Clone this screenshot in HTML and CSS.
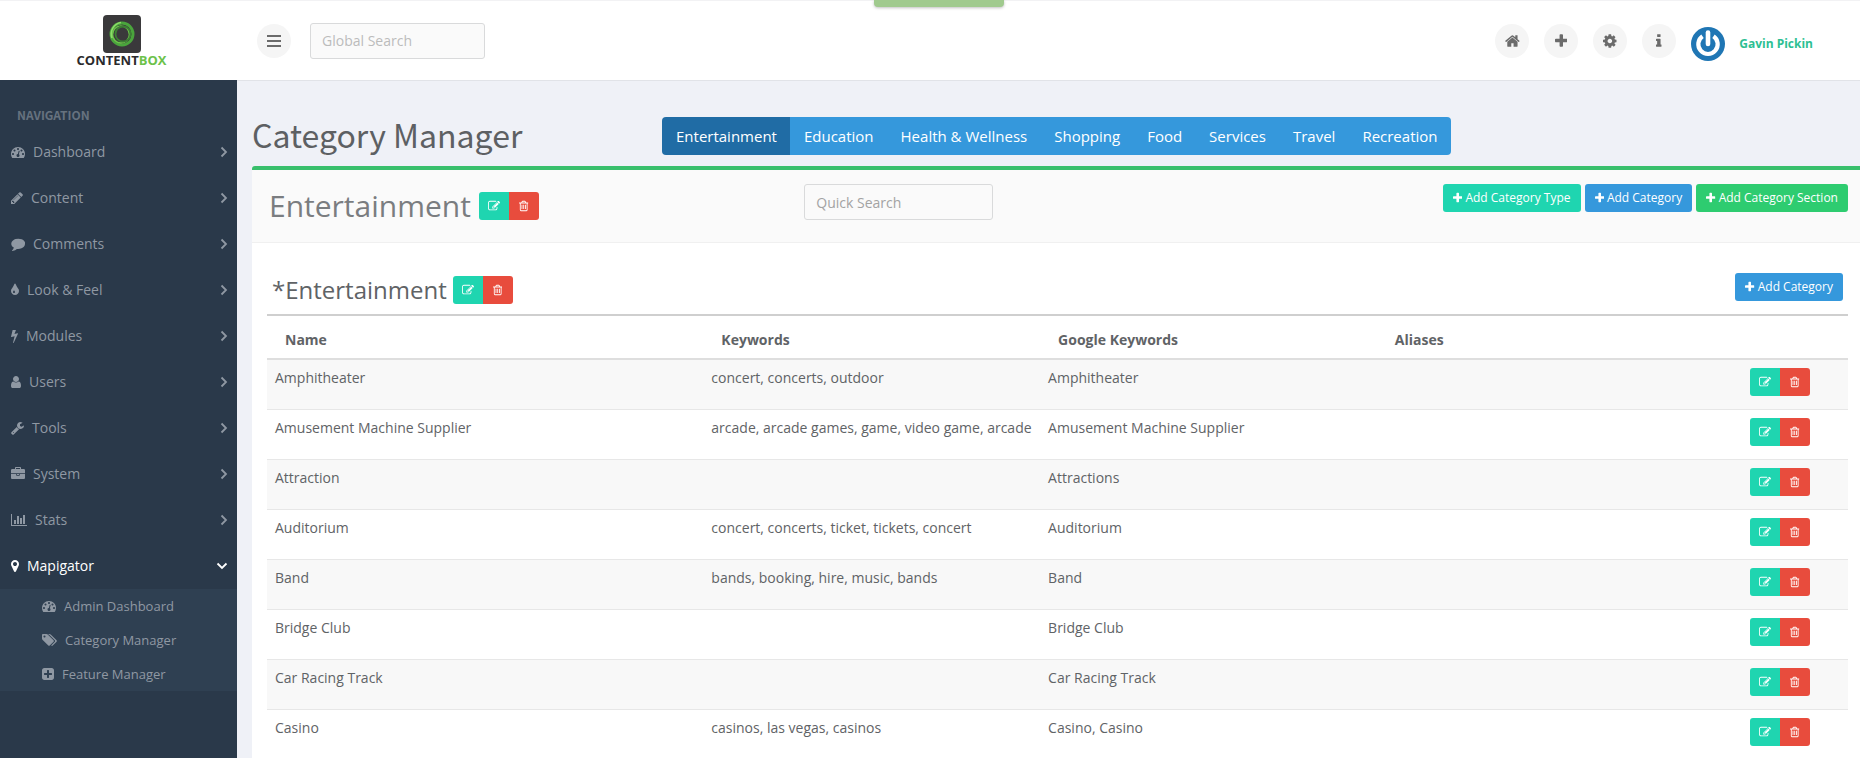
FILE: index.html
```html
<!DOCTYPE html>
<html lang="en">
<head>
<meta charset="utf-8">
<title>Category Manager</title>
<link rel="stylesheet" href="styles.css">
</head>
<body>
<svg class="sprite" aria-hidden="true">
  <symbol id="i-home" viewBox="64 0 1664 1792"><path d="M1472 992v480q0 26-19 45t-45 19h-384v-384h-256v384h-384q-26 0-45-19t-19-45v-480q0-1 .5-3t.5-3l575-474 575 474q1 2 1 6zm223-69l-62 74q-8 9-21 11h-3q-13 0-21-7l-692-577-692 577q-12 8-24 7-13-2-21-11l-62-74q-8-10-7-23.500t11-21.500l719-599q32-26 76-26t76 26l244 204v-195q0-14 9-23t23-9h192q14 0 23 9t9 23v408l219 182q10 8 11 21.500t-7 23.500z"/></symbol>
  <symbol id="i-plus" viewBox="192 0 1408 1792"><path d="M1600 736v192q0 40-28 68t-68 28h-416v416q0 40-28 68t-68 28h-192q-40 0-68-28t-28-68v-416h-416q-40 0-68-28t-28-68v-192q0-40 28-68t68-28h416v-416q0-40 28-68t68-28h192q40 0 68 28t28 68v416h416q40 0 68 28t28 68z"/></symbol>
  <symbol id="i-cog" viewBox="128 0 1536 1792"><path d="M1152 896q0-106-75-181t-181-75-181 75-75 181 75 181 181 75 181-75 75-181zm512-109v222q0 12-8 23t-20 13l-185 28q-19 54-39 91 35 50 107 138 10 12 10 25t-9 23q-27 37-99 108t-94 71q-12 0-26-9l-138-108q-44 23-91 38-16 136-29 186-7 28-36 28h-222q-14 0-24.500-8.500t-11.500-21.500l-28-184q-49-16-90-37l-141 107q-10 9-25 9-14 0-25-11-126-114-165-168-7-10-7-23 0-12 8-23 15-21 51-66.500t54-70.500q-27-50-41-99l-183-27q-13-2-21-12.500t-8-23.500v-222q0-12 8-23t19-13l186-28q14-46 39-92-40-57-107-138-10-12-10-24 0-10 9-23 26-36 98.500-107.500t94.500-71.500q13 0 26 10l138 107q44-23 91-38 16-136 29-186 7-28 36-28h222q14 0 24.500 8.500t11.500 21.500l28 184q49 16 90 37l142-107q9-9 24-9 13 0 25 10 129 119 165 170 7 8 7 22 0 12-8 23-15 21-51 66.500t-54 70.500q26 50 41 98l183 28q13 2 21 12.500t8 23.500z"/></symbol>
  <symbol id="i-info" viewBox="576 0 640 1792"><path d="M1216 1344v128q0 26-19 45t-45 19h-512q-26 0-45-19t-19-45v-128q0-26 19-45t45-19h64v-384h-64q-26 0-45-19t-19-45v-128q0-26 19-45t45-19h384q26 0 45 19t19 45v576h64q26 0 45 19t19 45zm-128-1152v192q0 26-19 45t-45 19h-256q-26 0-45-19t-19-45v-192q0-26 19-45t45-19h256q26 0 45 19t19 45z"/></symbol>
  <symbol id="i-bars" viewBox="0 0 16 14"><path d="M1 1h14v2H1zM1 6h14v2H1zM1 11h14v2H1z"/></symbol>
  <symbol id="i-dash" viewBox="0 0 1792 1792"><path d="M384 1152q0-53-37.500-90.500t-90.500-37.500-90.500 37.500-37.500 90.500 37.500 90.500 90.500 37.500 90.500-37.500 37.500-90.500zm192-448q0-53-37.500-90.500t-90.500-37.500-90.500 37.500-37.500 90.500 37.500 90.500 90.500 37.500 90.500-37.500 37.500-90.500zm428 481l101-382q6-26-7.500-48.500t-38.500-29.500-48 6.500-30 39.500l-101 382q-60 5-107 43.500t-63 98.500q-20 77 20 146t117 89 146-20 89-117q16-60-6-117t-72-91zm660-33q0-53-37.500-90.500t-90.500-37.500-90.500 37.500-37.500 90.500 37.500 90.500 90.500 37.500 90.500-37.500 37.500-90.500zm-640-640q0-53-37.500-90.500t-90.500-37.500-90.500 37.500-37.500 90.500 37.500 90.500 90.500 37.500 90.500-37.500 37.500-90.500zm448 192q0-53-37.500-90.500t-90.500-37.500-90.500 37.500-37.500 90.500 37.500 90.500 90.500 37.500 90.500-37.500 37.500-90.500zm320 448q0 261-141 483-19 29-54 29h-1402q-35 0-54-29-141-221-141-483 0-182 71-348t191-286 286-191 348-71 348 71 286 191 191 286 71 348z"/></symbol>
  <symbol id="i-pencil" viewBox="128 0 1536 1792"><path d="M491 1536l91-91-235-235-91 91v107h128v128h107zm523-928q0-22-22-22-10 0-17 7l-542 542q-7 7-7 17 0 22 22 22 10 0 17-7l542-542q7-7 7-17zm-54-192l416 416-832 832h-416v-416zm683 96q0 53-37 90l-166 166-416-416 166-165q36-38 90-38 53 0 91 38l235 234q37 39 37 91z"/></symbol>
  <symbol id="i-comment" viewBox="0 0 1792 1792"><path d="M1792 896q0 174-120 321.500t-326 233-450 85.500q-70 0-145-8-198 175-460 242-49 14-114 22-17 2-30.500-9t-17.500-29q-3-13 8-27l53-58q55-58 97-129t85-184q-157-89-247.500-220t-90.500-281q0-130 71-248.500t191-204.500 286-136.500 348-50.500q244 0 450 85.500t326 233 120 321.500z"/></symbol>
  <symbol id="i-tint" viewBox="384 0 1024 1792"><path d="M896 1152q0-36-20-69-1-1-15.500-22.500t-25.500-38-25-44-21-50.500q-4-16-21-16t-21 16q-7 23-21 50.500t-25 44-25.500 38-15.500 22.500q-20 33-20 69 0 53 37.500 90.500t90.500 37.500 90.500-37.500 37.500-90.500zm512-128q0 212-150 362t-362 150-362-150-150-362q0-145 81-275 6-9 62.500-90.500t101-151 99.500-178 83-201.500q9-30 34-47t51-17 51.500 17 33.500 47q28 93 83 201.500t99.500 178 101 151 62.500 90.500q81 127 81 275z"/></symbol>
  <symbol id="i-bolt" viewBox="448 0 896 1792"><path d="M1333 566q18 20 7 44l-540 1157q-13 25-42 25-4 0-14-2-17-5-25.500-19t-4.500-30l197-808-406 101q-4 1-12 1-18 0-31-11-18-15-13-39l201-825q4-14 16-23t28-9h328q19 0 32 12.500t13 29.500q0 8-5 18l-171 463 396-98q8-2 12-2 19 0 34 15z"/></symbol>
  <symbol id="i-user" viewBox="256 0 1280 1792"><path d="M1536 1399q0 109-62.500 187t-150.500 78h-854q-88 0-150.500-78t-62.500-187q0-85 8.500-160.500t31.500-152 58.500-131 94-89 134.500-34.500q131 128 313 128t313-128q76 0 134.500 34.500t94 89 58.500 131 31.500 152 8.500 160.500zm-256-887q0 159-112.500 271.500t-271.500 112.500-271.500-112.500-112.500-271.500 112.500-271.500 271.500-112.500 271.500 112.500 112.500 271.500z"/></symbol>
  <symbol id="i-wrench" viewBox="64 0 1664 1792"><path d="M448 1472q0-26-19-45t-45-19-45 19-19 45 19 45 45 19 45-19 19-45zm644-420l-682 682q-37 37-90 37-52 0-91-37l-106-108q-38-36-38-90 0-53 38-91l681-681q39 98 114.500 173.500t173.500 114.500zm634-435q0 39-23 106-47 134-164.500 217.500t-258.500 83.500q-185 0-316.500-131.500t-131.500-316.500 131.500-316.500 316.500-131.500q58 0 121.500 16.500t107.500 46.500q16 11 16 28t-16 28l-293 169v224l193 107q5-3 79-48.500t135.500-81 70.500-35.500q15 0 23.500 10t8.500 25z"/></symbol>
  <symbol id="i-case" viewBox="0 0 1792 1792"><path d="M640 256h512v-128h-512v128zm1152 640v480q0 66-47 113t-113 47h-1472q-66 0-113-47t-47-113v-480h672v160q0 26 19 45t45 19h320q26 0 45-19t19-45v-160h672zm-768 0v128h-256v-128h256zm768-480v384h-1792v-384q0-66 47-113t113-47h352v-160q0-40 28-68t68-28h576q40 0 68 28t28 68v160h352q66 0 113 47t47 113z"/></symbol>
  <symbol id="i-chart" viewBox="0 0 2048 1792"><path d="M0 128h128v1408h1920v128H0zM384 896h256v512H384zM768 384h256v1024H768zM1152 640h256v768h-256zM1536 256h256v1152h-256z"/></symbol>
  <symbol id="i-pin" viewBox="384 0 1024 1792"><path d="M1152 640q0-106-75-181t-181-75-181 75-75 181 75 181 181 75 181-75 75-181zm256 0q0 109-33 179l-364 774q-16 33-47.500 52t-67.500 19-67.500-19-46.500-52l-365-774q-33-70-33-179 0-212 150-362t362-150 362 150 150 362z"/></symbol>
  <symbol id="i-tags" viewBox="0 0 1920 1792"><path d="M448 448q0-53-37.500-90.500t-90.500-37.500-90.500 37.500-37.500 90.500 37.500 90.500 90.500 37.500 90.500-37.500 37.500-90.500zm1067 576q0 53-37 90l-491 492q-39 37-91 37-53 0-90-37l-715-716q-38-37-64.500-101t-26.500-117v-416q0-52 38-90t90-38h416q53 0 117 26.500t102 64.500l715 714q37 39 37 91zm384 0q0 53-37 90l-491 492q-39 37-91 37-36 0-59-14t-53-45l470-470q37-37 37-90 0-52-37-91l-715-714q-38-38-102-64.500t-117-26.500h224q53 0 117 26.500t102 64.500l715 714q37 39 37 91z"/></symbol>
  <symbol id="i-plussq" viewBox="128 0 1536 1792"><path d="M1408 960v-128q0-26-19-45t-45-19h-320v-320q0-26-19-45t-45-19h-128q-26 0-45 19t-19 45v320h-320q-26 0-45 19t-19 45v128q0 26 19 45t45 19h320v320q0 26 19 45t45 19h128q26 0 45-19t19-45v-320h320q26 0 45-19t19-45zm256-544v960q0 119-84.500 203.500t-203.500 84.500h-960q-119 0-203.500-84.500t-84.500-203.500v-960q0-119 84.500-203.500t203.500-84.500h960q119 0 203.500 84.500t84.500 203.500z"/></symbol>
  <symbol id="i-edit" viewBox="0 0 1792 1792"><path d="M888 1184l116-116-152-152-116 116v56h96v96h56zm440-720q-16-16-33 1l-350 350q-17 17-1 33t33-1l350-350q17-17 1-33zm80 594v190q0 119-84.500 203.500t-203.500 84.500h-832q-119 0-203.500-84.500t-84.500-203.500v-832q0-119 84.500-203.500t203.500-84.500h832q63 0 117 25 15 7 18 23 3 17-9 29l-49 49q-14 14-32 8-23-6-45-6h-832q-66 0-113 47t-47 113v832q0 66 47 113t113 47h832q66 0 113-47t47-113v-126q0-13 9-22l64-64q15-15 35-7t20 29zm-96-738l288 288-672 672h-288v-288zm444 132l-92 92-288-288 92-92q28-28 68-28t68 28l152 152q28 28 28 68t-28 68z"/></symbol>
  <symbol id="i-trash" viewBox="192 0 1408 1792"><path d="M704 736v576q0 14-9 23t-23 9h-64q-14 0-23-9t-9-23v-576q0-14 9-23t23-9h64q14 0 23 9t9 23zm256 0v576q0 14-9 23t-23 9h-64q-14 0-23-9t-9-23v-576q0-14 9-23t23-9h64q14 0 23 9t9 23zm256 0v576q0 14-9 23t-23 9h-64q-14 0-23-9t-9-23v-576q0-14 9-23t23-9h64q14 0 23 9t9 23zm128 724v-948h-896v948q0 22 7 40.500t14.500 27 10.500 8.500h832q3 0 10.500-8.500t14.500-27 7-40.500zm-672-1076h448l-48-117q-7-9-17-11h-317q-10 2-17 11zm928 32v64q0 14-9 23t-23 9h-96v948q0 83-47 143.500t-113 60.500h-832q-66 0-113-58.500t-47-141.500v-952h-96q-14 0-23-9t-9-23v-64q0-14 9-23t23-9h309l70-167q15-37 54-63t79-26h320q40 0 79 26t54 63l70 167h309q14 0 23 9t9 23z"/></symbol>
  <symbol id="i-right" viewBox="0 0 8 12"><path d="M1.500 1.500L6 6l-4.500 4.500" fill="none" stroke="currentColor" stroke-width="1.800"/></symbol>
  <symbol id="i-down" viewBox="0 0 12 8"><path d="M1.500 1.500L6 6l4.500-4.500" fill="none" stroke="currentColor" stroke-width="1.800"/></symbol>
</svg>

<div class="toast" role="status"></div>

<header class="topbar">
  <a class="brand" href="#" aria-label="ContentBox">
    <svg class="brand-mark" viewBox="0 0 38 38" aria-hidden="true">
      <rect width="38" height="38" rx="4" fill="#3a393b"/>
      <circle cx="19" cy="19" r="11" fill="none" stroke="#4aa53c" stroke-width="3"/>
      <circle cx="18" cy="19.500" r="8.500" fill="none" stroke="#6cc24a" stroke-width="1.600"/>
      <circle cx="20" cy="19" r="7.500" fill="none" stroke="#3b7f33" stroke-width="1.800"/>
      <path d="M9 23a11.500 11.500 0 0 1 9-15.500" fill="none" stroke="#8ddc6a" stroke-width="1.600"/>
    </svg>
    <span class="brand-name">CONTENT<span class="brand-accent">BOX</span></span>
  </a>
  <button class="round" type="button" aria-label="Toggle menu"><svg class="icon-bars"><use href="#i-bars"/></svg></button>
  <input class="field global-search" type="text" placeholder="Global Search" aria-label="Global Search">
  <div class="tools">
    <a class="round" href="#" aria-label="Home"><svg class="icon" viewBox="0 0 1664 1792"><use href="#i-home"/></svg></a>
    <a class="round" href="#" aria-label="Create"><svg class="icon" viewBox="0 0 1408 1792"><use href="#i-plus"/></svg></a>
    <a class="round" href="#" aria-label="Settings"><svg class="icon" viewBox="0 0 1536 1792"><use href="#i-cog"/></svg></a>
    <a class="round" href="#" aria-label="About"><svg class="icon" viewBox="0 0 640 1792"><use href="#i-info"/></svg></a>
    <a class="account" href="#">
      <svg class="avatar" viewBox="0 0 34 34" aria-hidden="true">
        <circle cx="17" cy="17" r="17" fill="#1f76b4"/>
        <path d="M11.500 9.300A9.700 9.700 0 1 0 22.500 9.300" fill="none" stroke="#fff" stroke-width="4.200"/>
        <path d="M17 5.500v11.500" stroke="#fff" stroke-width="4.600" stroke-linecap="round"/>
      </svg>
      <span>Gavin Pickin</span>
    </a>
  </div>
</header>

<div class="shell">
  <nav class="sidebar" aria-label="Navigation">
    <p class="nav-title">NAVIGATION</p>
    <a class="nav-item" href="#"><svg class="icon" viewBox="0 0 1792 1792"><use href="#i-dash"/></svg>Dashboard<svg class="chev"><use href="#i-right"/></svg></a>
    <a class="nav-item" href="#"><svg class="icon" viewBox="0 0 1536 1792"><use href="#i-pencil"/></svg>Content<svg class="chev"><use href="#i-right"/></svg></a>
    <a class="nav-item" href="#"><svg class="icon" viewBox="0 0 1792 1792"><use href="#i-comment"/></svg>Comments<svg class="chev"><use href="#i-right"/></svg></a>
    <a class="nav-item" href="#"><svg class="icon" viewBox="0 0 1024 1792"><use href="#i-tint"/></svg>Look &amp; Feel<svg class="chev"><use href="#i-right"/></svg></a>
    <a class="nav-item" href="#"><svg class="icon" viewBox="0 0 896 1792"><use href="#i-bolt"/></svg>Modules<svg class="chev"><use href="#i-right"/></svg></a>
    <a class="nav-item" href="#"><svg class="icon" viewBox="0 0 1280 1792"><use href="#i-user"/></svg>Users<svg class="chev"><use href="#i-right"/></svg></a>
    <a class="nav-item" href="#"><svg class="icon" viewBox="0 0 1664 1792"><use href="#i-wrench"/></svg>Tools<svg class="chev"><use href="#i-right"/></svg></a>
    <a class="nav-item" href="#"><svg class="icon" viewBox="0 0 1792 1792"><use href="#i-case"/></svg>System<svg class="chev"><use href="#i-right"/></svg></a>
    <a class="nav-item" href="#"><svg class="icon" viewBox="0 0 2048 1792"><use href="#i-chart"/></svg>Stats<svg class="chev"><use href="#i-right"/></svg></a>
    <a class="nav-item nav-open" href="#"><svg class="icon" viewBox="0 0 1024 1792"><use href="#i-pin"/></svg>Mapigator<svg class="chev chev-down"><use href="#i-down"/></svg></a>
    <div class="subnav">
      <a class="sub-item" href="#"><svg class="icon" viewBox="0 0 1792 1792"><use href="#i-dash"/></svg>Admin Dashboard</a>
      <a class="sub-item" href="#"><svg class="icon" viewBox="0 0 1920 1792"><use href="#i-tags"/></svg>Category Manager</a>
      <a class="sub-item" href="#"><svg class="icon" viewBox="0 0 1536 1792"><use href="#i-plussq"/></svg>Feature Manager</a>
    </div>
  </nav>

  <main class="main">
    <div class="title-row">
      <h1 class="page-title">Category Manager</h1>
      <div class="tabs">
        <button class="tab tab-active" type="button">Entertainment</button>
        <button class="tab" type="button">Education</button>
        <button class="tab" type="button">Health &amp; Wellness</button>
        <button class="tab" type="button">Shopping</button>
        <button class="tab" type="button">Food</button>
        <button class="tab" type="button">Services</button>
        <button class="tab" type="button">Travel</button>
        <button class="tab" type="button">Recreation</button>
      </div>
    </div>

    <section class="panel">
      <div class="panel-head">
        <div class="heading">
          <h2 class="type-title">Entertainment</h2>
          <div class="pair"><button class="act act-edit" type="button" aria-label="Edit"><svg class="icon-sm" viewBox="0 0 1792 1792"><use href="#i-edit"/></svg></button><button class="act act-del" type="button" aria-label="Delete"><svg class="icon-sm" viewBox="0 0 1408 1792"><use href="#i-trash"/></svg></button></div>
        </div>
        <div class="search-col"><input class="field quick-search" type="text" placeholder="Quick Search" aria-label="Quick Search"></div>
        <div class="head-actions">
          <button class="btn btn-teal" type="button"><svg class="icon-sm" viewBox="0 0 1408 1792"><use href="#i-plus"/></svg>Add Category Type</button>
          <button class="btn btn-blue" type="button"><svg class="icon-sm" viewBox="0 0 1408 1792"><use href="#i-plus"/></svg>Add Category</button>
          <button class="btn btn-green" type="button"><svg class="icon-sm" viewBox="0 0 1408 1792"><use href="#i-plus"/></svg>Add Category Section</button>
        </div>
      </div>

      <div class="panel-body">
        <div class="section-head">
          <div class="heading heading-sm">
            <h3 class="section-title">*Entertainment</h3>
            <div class="pair"><button class="act act-edit" type="button" aria-label="Edit"><svg class="icon-sm" viewBox="0 0 1792 1792"><use href="#i-edit"/></svg></button><button class="act act-del" type="button" aria-label="Delete"><svg class="icon-sm" viewBox="0 0 1408 1792"><use href="#i-trash"/></svg></button></div>
          </div>
          <button class="btn btn-blue" type="button"><svg class="icon-sm" viewBox="0 0 1408 1792"><use href="#i-plus"/></svg>Add Category</button>
        </div>
        <table class="grid">
          <colgroup><col class="c-name"><col class="c-key"><col class="c-key"><col class="c-alias"><col></colgroup>
          <thead><tr><th>Name</th><th>Keywords</th><th>Google Keywords</th><th>Aliases</th><th></th></tr></thead>
          <tbody id="rows"></tbody>
        </table>
      </div>
    </section>
  </main>
</div>
<script src="rows.js"></script>
</body>
</html>
```

FILE: styles.css
```css
* { box-sizing: border-box; }

body {
  margin: 0;
  height: 100vh;
  overflow: hidden;
  display: flex;
  flex-direction: column;
  background: #eff1f7;
  color: #5f6366;
  font: 14px/20px "Open Sans", sans-serif;
}

a { color: inherit; text-decoration: none; }
button, input { font: inherit; margin: 0; }
button { border: 0; cursor: pointer; }
svg { fill: currentColor; flex: none; display: block; }
h1, h2, h3, p { margin: 0; font-weight: 400; }

.sprite { display: none; }
.icon { height: 14px; }
.icon-sm { height: 12px; }

.toast {
  position: absolute;
  top: 0;
  left: 47%;
  width: 130px;
  height: 7px;
  border-radius: 0 0 4px 4px;
  background: #a0ca8e;
  box-shadow: 0 1px 3px rgba(0, 0, 0, .25);
}

.topbar {
  flex: none;
  height: 80px;
  display: flex;
  align-items: center;
  padding-right: 47px;
  background: #fff;
  border-top: 1px solid #f2f2f4;
  box-shadow: 0 1px 0 #e1e3e8;
}

.brand {
  width: 237px;
  margin-right: 20px;
  padding-left: 6px;
  display: flex;
  flex-direction: column;
  align-items: center;
}
.brand-mark { width: 38px; height: 38px; }
.brand-name { font: 700 13px/14px "Open Sans", sans-serif; color: #2b2a2c; }
.brand-accent { color: #6cc24a; }

.round {
  width: 34px;
  height: 34px;
  padding: 0;
  display: flex;
  align-items: center;
  justify-content: center;
  border-radius: 50%;
  background: #f5f5f5;
  color: #6b6b6b;
}
.round .icon { height: 16px; }
.icon-bars { width: 16px; height: 14px; }

.field {
  height: 36px;
  padding: 0 11px;
  border: 1px solid #d9dadb;
  border-radius: 3px;
  background: #fafafa;
  color: #555;
}
.field::placeholder { color: #a3a3a3; opacity: 1; }
.global-search { width: 175px; margin-left: 19px; }
.global-search::placeholder { color: #bcbcbc; }

.tools { margin-left: auto; display: flex; align-items: center; gap: 15px; }
.account {
  display: flex;
  align-items: center;
  gap: 14px;
  padding-top: 6px;
  color: #2dbf93;
  font-size: 12px;
  font-weight: 700;
}
.avatar { width: 34px; height: 34px; }

.shell { flex: 1; min-height: 0; display: flex; }

.sidebar { position: relative; width: 237px; flex: none; background: #2a394a; color: #8f98a3; overflow: hidden; }
.nav-title {
  padding: 25px 17px 4px;
  font: 700 12px/20px "Noto Sans CJK SC", sans-serif;
  color: #66727f;
}
.nav-item {
  height: 46px;
  display: flex;
  align-items: center;
  gap: 8px;
  padding: 0 9px 0 11px;
}
.chev { width: 8px; height: 12px; margin-left: auto; }
.chev-down { width: 12px; height: 8px; }
.nav-open { color: #fff; }
.subnav { background: #2f4052; font-size: 13px; }
.sub-item {
  height: 34px;
  display: flex;
  align-items: center;
  gap: 8px;
  padding-left: 42px;
}

.main { flex: 1; min-width: 0; padding-left: 15px; overflow: hidden; }

.title-row {
  display: grid;
  grid-template-columns: 1fr 3fr;
  align-items: center;
  padding: 33px 0 7px;
}
.page-title {
  padding-bottom: 4px;
  font: 400 32px/42px "Noto Sans CJK SC", sans-serif;
  color: #5d6063;
  white-space: nowrap;
}
.tabs { display: flex; padding-left: 8px; }
.tab {
  height: 38px;
  padding: 0 13px 0 14px;
  background: #3598dc;
  color: #fff;
  font-size: 15px;
  white-space: nowrap;
}
.tab-active { background: #206ca5; }
.tab:first-child { border-radius: 4px 0 0 4px; }
.tab:last-child { border-radius: 0 4px 4px 0; }

.panel { background: #fff; border-top: 4px solid #38bf6c; border-radius: 3px 0 0 0; }
.panel-head {
  display: grid;
  grid-template-columns: 1fr 1fr 1fr;
  padding: 14px 12px 14px 17px;
  background: #fafafa;
  border-bottom: 1px solid #f0f0f0;
}
.heading { display: flex; align-items: center; gap: 8px; }
.heading-sm { gap: 6px; }
.type-title { font-size: 30px; line-height: 44px; color: #7a7d80; }
.section-title { font-size: 24px; line-height: 34px; }
.search-col { padding-left: 9px; }
.quick-search { width: 189px; }
.head-actions { display: flex; justify-content: flex-end; align-items: flex-start; gap: 4px; }

.pair { display: flex; }
.act {
  width: 30px;
  height: 28px;
  padding: 0;
  display: flex;
  align-items: center;
  justify-content: center;
  color: #fff;
}
.act-edit { background: #1fd5b0; border-radius: 3px 0 0 3px; }
.act-del { background: #e84c3d; border-radius: 0 3px 3px 0; }

.btn {
  height: 28px;
  padding: 0 10px;
  display: flex;
  align-items: center;
  gap: 3px;
  border-radius: 3px;
  color: #fff;
  font-size: 12px;
  white-space: nowrap;
}
.btn-teal { background: #1fd5b0; }
.btn-blue { background: #3598dc; }
.btn-green { background: #2ecc70; }

.panel-body { padding: 30px 12px 0 15px; }
.section-head {
  display: flex;
  justify-content: space-between;
  align-items: flex-start;
  padding: 0 5px 7px;
  border-bottom: 2px solid #cfcfcf;
}

.grid { width: 100%; border-collapse: collapse; table-layout: fixed; }
.c-name { width: 27.6%; }
.c-key { width: 21.3%; }
.c-alias { width: 23.1%; }
.grid th {
  height: 43px;
  padding: 5px 18px 0;
  text-align: left;
  font-weight: 700;
  border-bottom: 2px solid #dedede;
}
.grid td {
  height: 50px;
  padding: 8px;
  vertical-align: top;
  border-bottom: 1px solid #e7e7e7;
  white-space: nowrap;
}
.grid tbody tr:nth-child(odd) { background: #f8f8f8; }
```

FILE: rows.js
```javascript
const categories = [
  ["Amphitheater", "concert, concerts, outdoor", "Amphitheater"],
  ["Amusement Machine Supplier", "arcade, arcade games, game, video game, arcade", "Amusement Machine Supplier"],
  ["Attraction", "", "Attractions"],
  ["Auditorium", "concert, concerts, ticket, tickets, concert", "Auditorium"],
  ["Band", "bands, booking, hire, music, bands", "Band"],
  ["Bridge Club", "", "Bridge Club"],
  ["Car Racing Track", "", "Car Racing Track"],
  ["Casino", "casinos, las vegas, casinos", "Casino, Casino"]
];
const actions = document.querySelector(".pair");
const body = document.getElementById("rows");
for (const category of categories) {
  const row = body.insertRow();
  for (const text of category) row.insertCell().textContent = text;
  row.insertCell();
  row.insertCell().append(actions.cloneNode(true));
}
```
